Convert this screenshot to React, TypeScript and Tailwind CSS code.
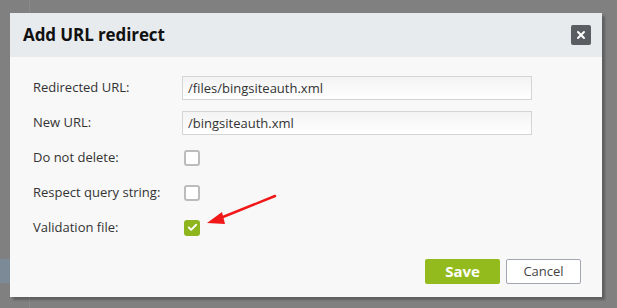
import { Check, X } from "lucide-react";

const FONT = { fontFamily: '"Open Sans", "Liberation Sans", sans-serif' };

const rows = [
  { label: "Redirected URL:", kind: "text", value: "/files/bingsiteauth.xml" },
  { label: "New URL:", kind: "text", value: "/bingsiteauth.xml" },
  { label: "Do not delete:", kind: "check", checked: false },
  { label: "Respect query string:", kind: "check", checked: false },
  { label: "Validation file:", kind: "check", checked: true },
];

const App = () => {
  return (
    <div className="relative w-[617px] h-[308px] overflow-hidden bg-[#808080]" style={FONT}>
      {/* page behind the overlay */}
      <div className="absolute left-[29px] top-0 h-full w-px bg-[#8a8a8a]" />
      <div className="absolute left-0 top-[259px] h-[24px] w-[12px] bg-[#7b8a96]" />

      {/* Dialog */}
      <div className="absolute left-[10px] top-[13px] w-[592px] h-[284px] bg-[#f8f8f8] shadow-[3px_3px_2px_rgba(0,0,0,0.25)] flex flex-col">
        <div className="h-[44px] bg-[#e8ebee] flex items-center justify-between pl-[13px] pr-[11px]">
          <h2 className="text-[17px] font-bold text-[#111] tracking-[-0.1px]">Add URL redirect</h2>
          <button className="w-[20px] h-[20px] rounded-[2px] bg-[#5a5e63] flex items-center justify-center">
            <X size={12} strokeWidth={4} color="#fff" />
          </button>
        </div>
        <div className="flex-1 flex flex-col pl-[23px] pt-[13px]">
          {rows.map((r) => (
            <div key={r.label} className="flex items-center h-[35px] text-[13px] text-[#333]">
              <label className="w-[149px]">{r.label}</label>
              {r.kind === "text" ? (
                <input
                  readOnly
                  value={r.value}
                  className="w-[350px] h-[24px] border border-[#d4d4d4] bg-gradient-to-b from-[#f3f3f3] to-white px-[5px] text-[13px] text-[#333] outline-none"
                  style={FONT}
                />
              ) : r.checked ? (
                <span className="ml-[2px] w-[16px] h-[16px] rounded-[3px] bg-[#8eb51e] flex items-center justify-center">
                  <Check size={11} strokeWidth={4} color="#fff" />
                </span>
              ) : (
                <span className="ml-[2px] w-[16px] h-[16px] rounded-[3px] border-2 border-[#bcbcbc] bg-white" />
              )}
            </div>
          ))}
          <div className="flex justify-end gap-[6px] pr-[21px] mt-auto mb-[13px]">
            <button className="w-[75px] h-[25px] rounded-[2px] bg-[#94bb1e] text-white text-[15px] font-bold">
              Save
            </button>
            <button className="w-[75px] h-[25px] rounded-[2px] border border-[#a3a7b3] bg-white text-[#444] text-[13px]">
              Cancel
            </button>
          </div>
        </div>
      </div>

      {/* red arrow annotation */}
      <svg className="absolute left-0 top-0" width="617" height="308">
        <line x1="275" y1="196" x2="218" y2="219" stroke="#f01818" strokeWidth="2.5" strokeLinecap="round" />
        <polygon points="207,223 222,212 225,224" fill="#f01818" />
      </svg>
    </div>
  );
};

export default App;
